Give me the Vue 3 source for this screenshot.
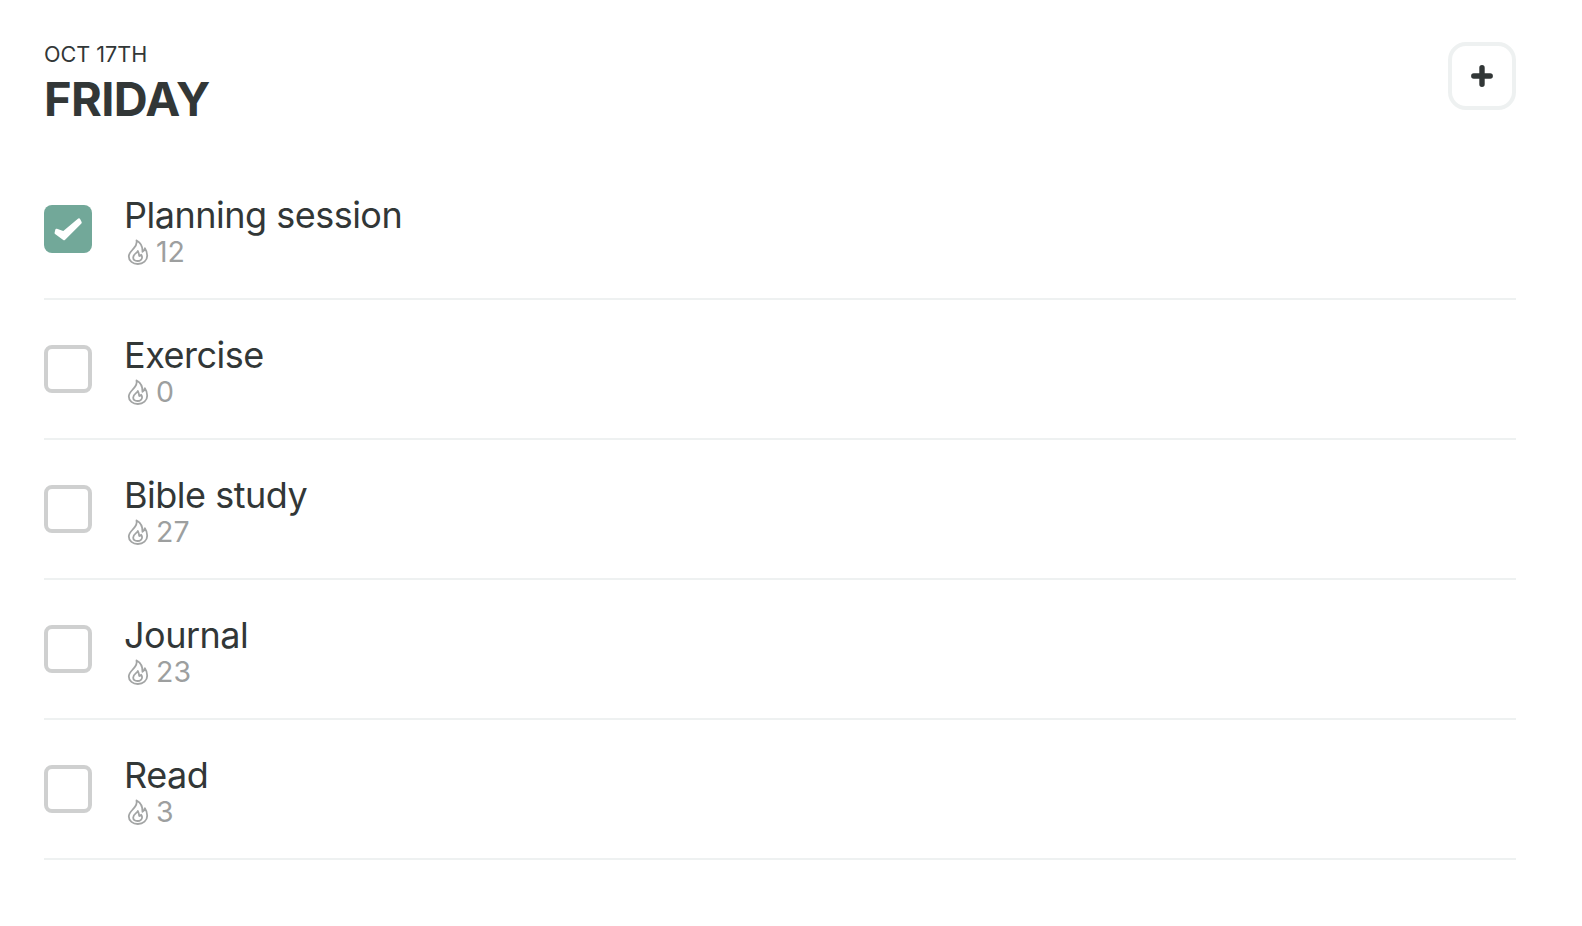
<script setup>
const habits = [
  { name: "Planning session", streak: 12, done: true },
  { name: "Exercise", streak: 0, done: false },
  { name: "Bible study", streak: 27, done: false },
  { name: "Journal", streak: 23, done: false },
  { name: "Read", streak: 3, done: false },
];
</script>

<template>
  <div class="page">
    <header class="head">
      <div>
        <div class="date">OCT 17TH</div>
        <h1 class="day">FRIDAY</h1>
      </div>
      <button class="add" type="button" aria-label="Add">
        <svg width="24" height="24" viewBox="0 0 24 24">
          <path d="M12 3.800v16.400M3.800 12h16.400" stroke="#323737" stroke-width="5.400" stroke-linecap="round" fill="none" />
        </svg>
      </button>
    </header>

    <ul class="list">
      <li v-for="h in habits" :key="h.name" class="row">
        <span class="box" :class="{ checked: h.done }">
          <svg v-if="h.done" width="32" height="32" viewBox="0 0 32 32">
            <path d="M4.500 17L11.500 19.500L27 6.500L28.500 9.500L12 26L3.800 20Z" fill="#fff" stroke="#fff" stroke-width="2.500" stroke-linejoin="round" />
          </svg>
        </span>
        <div class="info">
          <div class="name">{{ h.name }}</div>
          <div class="streak">
            <svg class="flame" width="22" height="26" viewBox="0 0 22 26" fill="none" stroke="#a3a5a5" stroke-width="1.800" stroke-linejoin="round" stroke-linecap="round">
              <path d="M9.500 1.500c1 3.600-.8 5.800-3 8.200C4 12.400 1.800 14.400 1.800 17.400c0 4.600 4 7.600 9 7.600 5.400 0 9.400-3.500 9.400-8.300 0-2.800-.8-5.400-2.300-7.500-.3 1.700-1 2.900-2.400 3.600.2-4.700-1.500-9-5.900-11.300z" />
              <path d="M10.800 12c-.5 2-4.600 3-4.600 6.500 0 2.200 2 3.500 4.400 3.500 2.500 0 4.500-1.500 4.500-3.700 0-1-.3-1.800-.9-2.500-.5.800-1.200 1.200-2 1.200-.2-1.800-.6-3.500-1.400-5z" />
            </svg>
            <span>{{ h.streak }}</span>
          </div>
        </div>
      </li>
    </ul>
  </div>
</template>

<style scoped>
.page {
  padding: 41px 66px 0 44px;
  font-family: Inter, "Liberation Sans", sans-serif;
  color: #323737;
}

.head {
  display: flex;
  justify-content: space-between;
  align-items: flex-start;
  height: 119px;
}

.date {
  font-size: 21.600px;
  line-height: 26px;
}

.day {
  margin: 3px 0 0;
  font-size: 47px;
  line-height: 58px;
  font-weight: 700;
  letter-spacing: -0.6px;
}

.add {
  width: 68px;
  height: 68px;
  margin-top: 1px;
  display: flex;
  align-items: center;
  justify-content: center;
  padding: 0;
  background: #fff;
  border: 4px solid #eef1f1;
  border-radius: 18px;
}

.list {
  list-style: none;
  margin: 0;
  padding: 0;
}

.row {
  display: flex;
  align-items: center;
  gap: 32px;
  height: 138px;
  border-bottom: 2px solid #eef1f1;
}

.box {
  width: 48px;
  height: 48px;
  box-sizing: border-box;
  flex: none;
  display: flex;
  align-items: center;
  justify-content: center;
  border: 4px solid #cfd0d0;
  border-radius: 8px;
}

.box.checked {
  background: #72a899;
  border: none;
}

.info {
  margin-top: 4px;
}

.name {
  font-size: 36px;
  line-height: 42px;
  letter-spacing: -0.5px;
}

.streak {
  display: flex;
  align-items: center;
  gap: 7px;
  font-size: 28.500px;
  line-height: 32px;
  color: #9d9f9f;
}

.flame {
  margin-left: 3px;
}
</style>

<style>
html,
body {
  background: #fff;
}
</style>
